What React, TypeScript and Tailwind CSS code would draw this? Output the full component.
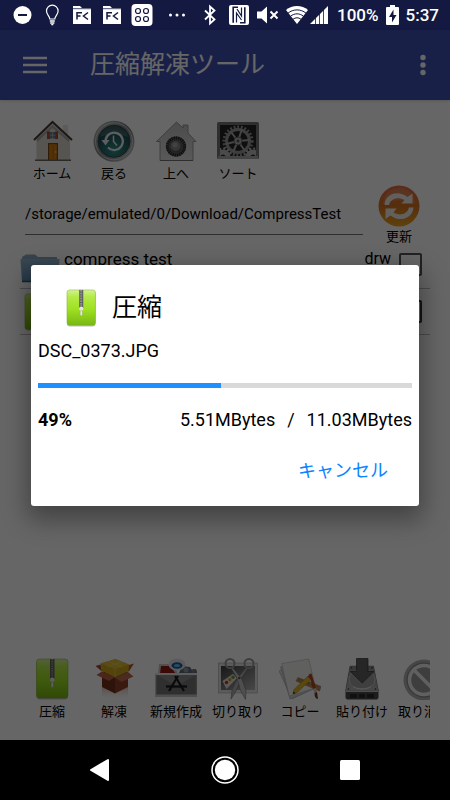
import { ReactNode, useState } from "react";

interface toolInterface {
  label: string;
  icon: ReactNode;
}

const HomeIcon = () => (
  <svg viewBox="0 0 42 42" className="size-[42px]">
    <rect x="32" y="3" width="5" height="14" fill="#e4e4e0" />
    <rect x="31" y="3" width="7" height="2" fill="#fff" />
    <path d="M5.500 19 21.500 3 39 19V40H5.500Z" fill="#d6d4cc" />
    <path d="M6 19 21.500 5 38 19V22L21.500 8 6 22Z" fill="#aaa79e" />
    <path d="M3 20 21.500 2 41 20" fill="none" stroke="#4b3a35" strokeWidth="2" />
    <rect x="16" y="11.500" width="3" height="7.500" fill="#a64a30" />
    <rect x="24" y="11.500" width="3" height="7.500" fill="#a64a30" />
    <rect x="18.500" y="12" width="6" height="6.500" fill="#667688" />
    <path d="M18.500 15.200h6M21.500 12v6.500" stroke="#d8d8d8" strokeWidth="0.500" />
    <rect x="17" y="23" width="10" height="17" fill="#7e4a14" />
    <rect x="18.200" y="24.200" width="7.600" height="15.800" fill="#d27d17" />
    <path d="M22 25v14" stroke="#a85f10" strokeWidth="0.800" />
    <circle cx="24.800" cy="32" r="0.700" fill="#ffe6a0" />
    <rect x="4" y="39.500" width="36" height="1.500" fill="#6b675e" />
  </svg>
);

const BackIcon = () => (
  <svg viewBox="0 0 42 42" className="size-[42px]">
    <defs>
      <linearGradient id="rim" x1="0" y1="0" x2="1" y2="1">
        <stop offset="0" stopColor="#bfc3c3" />
        <stop offset="0.500" stopColor="#777c7e" />
        <stop offset="1" stopColor="#c8cccc" />
      </linearGradient>
      <radialGradient id="glass" cx="0.500" cy="0.800" r="0.800">
        <stop offset="0" stopColor="#2f8f8c" />
        <stop offset="1" stopColor="#12343c" />
      </radialGradient>
    </defs>
    <circle cx="21" cy="21.300" r="20.500" fill="url(#rim)" />
    <circle cx="21" cy="21.300" r="18.500" fill="none" stroke="#e2e6e6" strokeWidth="0.700" />
    <circle cx="21" cy="21.300" r="16" fill="url(#glass)" stroke="#3c4648" />
    <path d="M6.500 17a15 15 0 0 1 29 0c-8-3.500-21-3.500-29 0Z" fill="#fff" opacity="0.160" />
    <path d="M12.500 20.500a8.700 8.700 0 1 1 2.500 7" fill="none" stroke="#e9eeee" strokeWidth="2.200" />
    <path d="M8.500 20h8l-4 5.500Z" fill="#e9eeee" />
    <path d="M20.500 15.500V21.500l3.500 4" fill="none" stroke="#e9eeee" strokeWidth="1.500" />
  </svg>
);

const UpIcon = () => (
  <svg viewBox="0 0 42 42" className="size-[42px]">
    <defs>
      <linearGradient id="steel" x1="0" y1="0" x2="0" y2="1">
        <stop offset="0" stopColor="#bdbdbd" />
        <stop offset="1" stopColor="#dedede" />
      </linearGradient>
    </defs>
    <path
      d="M5 40.500V21.500H1.500L21.500 2l6.500 6V5h5v8l8 8.500H38V40.500Z"
      fill="url(#steel)"
      stroke="#888"
      strokeWidth="0.800"
    />
    <path d="M5 40.500H38" stroke="#777" />
    <circle cx="21" cy="26.500" r="10.300" fill="#6a6a6a" />
    <circle cx="21" cy="26.500" r="8.500" fill="none" stroke="#292929" strokeWidth="3" strokeDasharray="1.500 0.700" />
    <circle cx="21" cy="26.500" r="6.500" fill="#555" />
    <circle cx="20.500" cy="26" r="5" fill="#858585" />
    <circle cx="20" cy="25" r="2.500" fill="#a5a5a5" />
  </svg>
);

const SortIcon = () => (
  <svg viewBox="0 0 42 42" className="size-[42px]">
    <defs>
      <clipPath id="screen">
        <rect x="3" y="5" width="36" height="31" />
      </clipPath>
    </defs>
    <rect x="0" y="2" width="42" height="37" rx="1.500" fill="#777" />
    <rect x="1" y="36" width="40" height="3" fill="#a8a8a8" />
    <rect x="3" y="5" width="36" height="31" fill="#242424" />
    <g clipPath="url(#screen)" fill="none">
      <circle cx="21" cy="21" r="14" stroke="#999" strokeWidth="3" strokeDasharray="1.800 1.800" />
      <circle cx="21" cy="21" r="11.500" stroke="#999" strokeWidth="3" />
      <path d="M21 21 14 12M21 21l12-1M21 21l7 10M21 21 9 24M21 21l4-12M21 21l-5 11" stroke="#aaa" strokeWidth="2" />
      <circle cx="21" cy="21" r="4" fill="#b2b2b2" stroke="#666" />
      <circle cx="21" cy="21" r="1.500" fill="#555" />
      <circle cx="6" cy="37" r="5" stroke="#bbb" strokeWidth="5" />
      <circle cx="6" cy="37" r="8.500" stroke="#bbb" strokeWidth="2" strokeDasharray="2 2" />
      <circle cx="36" cy="37" r="5" stroke="#bbb" strokeWidth="5" />
      <circle cx="36" cy="37" r="8.500" stroke="#bbb" strokeWidth="2" strokeDasharray="2 2" />
    </g>
  </svg>
);

const RefreshIcon = () => (
  <svg viewBox="0 0 42 42" className="size-[42px]">
    <defs>
      <linearGradient id="orange" x1="0" y1="0" x2="0" y2="1">
        <stop offset="0" stopColor="#e0704a" />
        <stop offset="0.500" stopColor="#d9741f" />
        <stop offset="1" stopColor="#eda323" />
      </linearGradient>
    </defs>
    <circle cx="21" cy="21" r="20.500" fill="url(#orange)" />
    <path d="M5 19a16 16 0 0 1 32 0c-9-5-23-5-32 0Z" fill="#fff" opacity="0.120" />
    <g fill="#f4f0ea">
      <path d="M6.500 20C7 9 20 4.500 29.500 12L34.500 8.500V18.500H23.500L26.500 15C20 11.500 12.500 13.500 11 20Z" />
      <path d="M35.500 22.500C35 33 22 38 12.500 30.500L7.500 34V23.500H18.500L15.500 27.500C22 31.500 29.500 29 31 22.500Z" />
    </g>
  </svg>
);

const ZipIcon = ({ className }: { className: string }) => (
  <svg viewBox="0 0 42 42" className={className}>
    <defs>
      <linearGradient id="lime" x1="0" y1="0" x2="0" y2="1">
        <stop offset="0" stopColor="#d3f296" />
        <stop offset="0.200" stopColor="#b4ea46" />
        <stop offset="0.550" stopColor="#9ee022" />
        <stop offset="1" stopColor="#78b814" />
      </linearGradient>
    </defs>
    <rect x="5.500" y="2" width="31.500" height="39.500" rx="3" fill="#000" opacity="0.250" />
    <rect x="5.500" y="1" width="31.500" height="39" rx="3" fill="url(#lime)" stroke="#76ab22" strokeWidth="0.500" />
    <path d="M19 1h4.500v20H19Z" fill="#5d5d5d" />
    <path d="M21.200 1v20" stroke="#a5a5a5" strokeWidth="2.200" strokeDasharray="0.900 0.900" />
    <path d="M19.500 20h3.500l.6 2.500-1.300 1.500h-2.100L19 22.500Z" fill="#e5e5e5" />
    <rect x="20.100" y="24" width="2.300" height="5.500" rx="1" fill="#f2f2f2" stroke="#8d9f73" strokeWidth="0.500" />
  </svg>
);

const UnpackIcon = () => (
  <svg viewBox="0 0 42 42" className="size-[42px]">
    <defs>
      <linearGradient id="mirror" x1="0" y1="0" x2="0" y2="1">
        <stop offset="0" stopColor="#c08070" stopOpacity="0.600" />
        <stop offset="1" stopColor="#fff" stopOpacity="0" />
      </linearGradient>
    </defs>
    <path d="M9 28.500 22 35l13-6.500V38l-13 4-13-4Z" fill="url(#mirror)" />
    <path d="M9 14v15l13 6.500V19Z" fill="#74301d" />
    <path d="M22 19v16.500L35 29V14Z" fill="#8e4028" />
    <path d="M9 14 22.500 9 35 14 22 20Z" fill="#542215" />
    <path d="m7.500 5.500 15-4.500L36 6.500V13l-14 6.500L9 13Z" fill="#cfa81c" />
    <path d="m7.500 5.500 15-4.500L36 6.500 22 11Z" fill="#dcbb38" />
    <path d="M22 11v8.500M15 3.200l14 5.800M29 3.800 14.500 8.500" fill="none" stroke="#ead45c" strokeWidth="0.600" />
    <path d="M9 13.500 3.500 17 16 23l6-4Z" fill="#ba6045" />
    <path d="M22 19.500 35 14l5.500 4.500L28.500 24Z" fill="#be6a4d" />
    <path d="m2.500 8 5-1.500 1.500 7Z" fill="#9e4a33" />
    <path d="m36 7 5-1.500-5.500 8.500Z" fill="#ac553d" />
  </svg>
);

const NewIcon = () => (
  <svg viewBox="0 0 42 42" className="size-[42px]">
    <path d="M3 16 4 6h15l4 10Z" fill="#c8c8c8" />
    <path d="M5 16 6 8h9l6 8Z" fill="#971818" />
    <path d="M24 15 27 8l8 1 2 3 4-1 1.500 4Z" fill="#5d6c80" />
    <circle cx="31" cy="12" r="2.500" fill="#8f9aa8" />
    <circle cx="38.500" cy="13" r="2" fill="#6d7a88" />
    <ellipse cx="22" cy="6.500" rx="8.500" ry="6" fill="#dfe3e6" />
    <ellipse cx="22" cy="7.500" rx="5.500" ry="3.200" fill="#1d5a9c" />
    <ellipse cx="22" cy="7.500" rx="3" ry="1.600" fill="#60c4ef" />
    <rect x="0.500" y="15.500" width="41.500" height="23.500" fill="#8d8d8d" />
    <path d="M2 17h38.500v20H2Z" fill="#777" />
    <path d="M2 17h38.500L22 28Z" fill="#999595" opacity="0.700" />
    <rect x="0.500" y="15" width="41.500" height="2" fill="#e6e6e6" />
    <rect x="0.500" y="36.500" width="41.500" height="2.500" fill="#c4c4c4" />
    <g stroke="#191919" strokeWidth="2.200">
      <path d="M23 18 14 33" />
      <path d="m20 18 9 15" />
      <path d="M11 28.500h21" />
    </g>
  </svg>
);

const CutIcon = () => (
  <svg viewBox="0 0 42 42" className="size-[42px]">
    <defs>
      <linearGradient id="photo" x1="0" y1="0" x2="1" y2="1">
        <stop offset="0" stopColor="#3e3e3e" />
        <stop offset="1" stopColor="#b5b5b5" />
      </linearGradient>
    </defs>
    <rect x="1.500" y="5" width="39" height="30" fill="#e4e4e4" stroke="#aaa" strokeWidth="0.600" />
    <rect x="4" y="8" width="34" height="24" fill="url(#photo)" />
    <path d="m5.500 23 10.500-7 4 4L9.500 31Z" fill="#e5e2dc" />
    <circle cx="9.500" cy="24.500" r="1.700" fill="#b93526" />
    <circle cx="12.800" cy="21.800" r="1.700" fill="#d79a21" />
    <circle cx="16" cy="19.200" r="1.700" fill="#5c9c31" />
    <path d="M29.500 9.500 20.500 20 15 32l-1 9 4.500-7L24 21l7-11Z" fill="#b0b0b0" stroke="#666" strokeWidth="0.500" />
    <path d="m15.500 9.500 9 11 4.500 12-.5 9-5-9-3.500-12.500L14 10Z" fill="#c4c4c4" stroke="#666" strokeWidth="0.500" />
    <ellipse cx="13" cy="5.500" rx="4.500" ry="4.500" fill="none" stroke="#9a9a9a" strokeWidth="2" />
    <ellipse cx="32" cy="5.500" rx="4.500" ry="4.500" fill="none" stroke="#9a9a9a" strokeWidth="2" />
    <circle cx="22.300" cy="20" r="1.200" fill="#555" />
  </svg>
);

const CopyIcon = () => (
  <svg viewBox="0 0 42 42" className="size-[42px]">
    <path d="m0 13 24-9 12 26-23 11Z" fill="#dedede" stroke="#999" strokeWidth="0.500" />
    <path d="m1.500 9 26-6 9 27L11 41Z" fill="#d2d2d2" stroke="#999" strokeWidth="0.500" />
    <path d="m2.700 5.500 27-4.500 7 29-26.500 8Z" fill="#f0f0ec" stroke="#aaa" strokeWidth="0.500" />
    <path d="m17 23 2-3.500 23 9-1.500 4.500Z" fill="#bc8a54" stroke="#8a6238" strokeWidth="0.500" />
    <path d="m20 23 1-2m2 3 1-2m2 3.200 1-2m2 3.200 1-2m2 3.200 1-2m2 3.200 1-2" stroke="#6d4820" strokeWidth="0.500" />
    <path d="m28.500 18.500 3.500 3L18 34.500l-4 1.500 1-4.500Z" fill="#dfb724" stroke="#9a7a16" strokeWidth="0.500" />
    <path d="m28.500 18.500 1.500-1.500 3.500 3-1.500 1.500Z" fill="#c23b4c" />
    <path d="m14 36 .5-2.500 2 1.700Z" fill="#333" />
    <path d="m30 16 2.500-.5L37 30l-3 1Z" fill="#b0491f" />
    <path d="m34 31 3-1 1 4-2.500 1Z" fill="#c8c8c8" />
    <path d="m35.500 35 2.500-1 1 7c-2.500 0-3.500-3-3.500-6Z" fill="#6b3622" />
  </svg>
);

const PasteIcon = () => (
  <svg viewBox="0 0 42 42" className="size-[42px]">
    <defs>
      <linearGradient id="drive" x1="0" y1="0" x2="0" y2="1">
        <stop offset="0" stopColor="#8a8a8a" />
        <stop offset="1" stopColor="#b3b3b5" />
      </linearGradient>
    </defs>
    <path d="M9 8h23.500L37.500 33v7l-1.500 1.500H6L4.500 40V33Z" fill="#4a4a4d" />
    <path d="M9 8h23.500L37.500 33H4.500Z" fill="url(#drive)" stroke="#777" strokeWidth="0.500" />
    <ellipse cx="21" cy="21.500" rx="13" ry="10" fill="#9e9ea0" stroke="#d0d0d2" strokeWidth="0.800" />
    <path d="M12 28.500c4 3 14 3 18 0" fill="none" stroke="#ddd" />
    <circle cx="10.500" cy="10" r="0.800" fill="#333" />
    <circle cx="31" cy="10" r="0.800" fill="#333" />
    <circle cx="7.500" cy="31" r="0.800" fill="#333" />
    <circle cx="34.500" cy="31" r="0.800" fill="#333" />
    <path d="M4.500 33.500h33" stroke="#c6c6c8" />
    <path d="M9 36h7v4H9ZM18 36h6v4h-6ZM26 36h7v4h-7Z" fill="#28292e" />
    <path d="M15.500.5h11.500V13.500h6L21.200 25 9.500 13.500h6Z" fill="#606060" stroke="#303030" strokeWidth="0.700" />
  </svg>
);

const CancelIcon = () => (
  <svg viewBox="0 0 42 42" className="size-[42px]">
    <circle cx="21" cy="22" r="20.500" fill="#b0b0b0" />
    <circle cx="21" cy="22" r="17.500" fill="#8b8b8b" />
    <circle cx="21" cy="22" r="14.500" fill="#9b9b9b" stroke="#f0f0f0" strokeWidth="3.500" />
    <path d="m11 12 20 20" stroke="#f0f0f0" strokeWidth="3.500" />
  </svg>
);

const FolderIcon = () => (
  <svg viewBox="0 0 40 32" className="h-8 w-10">
    <defs>
      <linearGradient id="folder" x1="0" y1="0" x2="0" y2="1">
        <stop offset="0" stopColor="#8fb4cf" />
        <stop offset="1" stopColor="#5f8fb2" />
      </linearGradient>
    </defs>
    <path d="M2 4 6 1.500h9L18 4h19v6H2Z" fill="#88a9c0" />
    <path d="M.5 6H39.500L38 28.500H2Z" fill="url(#folder)" />
    <path d="M2 28.500h36" stroke="#395a74" strokeWidth="1.500" />
  </svg>
);

const FileTabIcon = () => (
  <svg viewBox="0 0 22 22" className="size-[22px]">
    <path d="M2 4.500V2h7l2 2h9v16H2Z" fill="#fff" />
    <path d="M2 4.700h18" stroke="#131940" strokeWidth="0.800" />
    <g fill="none" stroke="#131940" strokeWidth="1.500">
      <path d="M6 15.500V8.800h5M6 12h3.500" />
      <path d="M17 8.500 12.500 12l4.500 3.500" />
    </g>
  </svg>
);

const StatusBar = () => (
  <div className="flex h-[30px] shrink-0 items-center justify-between bg-[#131940] px-[11px] text-white">
    <div className="flex items-center gap-2">
      <svg viewBox="0 0 22 22" className="size-[22px]">
        <circle cx="11.500" cy="11" r="9" fill="#fff" />
        <path d="M7 11h9" stroke="#131940" strokeWidth="2" />
      </svg>
      <svg viewBox="0 0 22 22" className="size-[22px]" fill="none" stroke="#fff" strokeWidth="1.200">
        <path d="M8.800 15c0-3-3.300-4-3.300-8a5.800 5.800 0 0 1 11.600 0c0 4-3.300 5-3.300 8Z" />
        <path d="M8.800 17h5M9.200 19h4.200M10.300 20.600h2" strokeWidth="1.300" />
      </svg>
      <FileTabIcon />
      <FileTabIcon />
      <svg viewBox="0 0 22 22" className="size-[22px]">
        <rect x="0.500" y="0" width="21" height="22" rx="4" fill="#fff" />
        <g fill="none" stroke="#131940" strokeWidth="1.200">
          <circle cx="7" cy="7" r="2.500" />
          <circle cx="15" cy="7" r="2.500" />
          <circle cx="7" cy="15" r="2.500" />
          <circle cx="15" cy="15" r="2.500" />
        </g>
      </svg>
      <svg viewBox="0 0 28 22" className="h-[22px] w-7" fill="#fff">
        <circle cx="9.500" cy="11" r="1.500" />
        <circle cx="16" cy="11" r="1.500" />
        <circle cx="22.500" cy="11" r="1.500" />
      </svg>
    </div>
    <div className="flex items-center gap-[7px]">
      <svg viewBox="0 0 22 22" className="size-[22px]" fill="none" stroke="#fff" strokeWidth="1.800">
        <path d="m6 6.500 9.500 9L11 19.500V2.500l4.500 4L6 15.500" />
      </svg>
      <svg viewBox="0 0 22 22" className="size-[22px]">
        <rect x="1" y="1" width="20" height="20" rx="2" fill="#fff" />
        <g fill="none" stroke="#131940" strokeWidth="1.600">
          <path d="M10 3.200H5.200V18.800" />
          <path d="M12 18.800h4.800V3.200" />
          <path d="M8.500 18.500V9l5 7" strokeWidth="1.200" />
          <path d="M13.500 3.500V12L9 5" strokeWidth="1.200" />
        </g>
      </svg>
      <svg viewBox="0 0 22 22" className="size-[22px]">
        <path d="M0 7.500h4.500L10 2.500v17l-5.500-5H0Z" fill="#fff" />
        <path d="m13.500 7.500 7 7m0-7-7 7" stroke="#fff" strokeWidth="2" />
      </svg>
      <div className="flex">
        <svg viewBox="0 0 22 22" className="size-[22px]">
          <path d="M0 6C6 .5 16 .5 22 6L11 20Z" fill="#fff" />
          <path d="M2 9.200c5-4.400 13-4.400 18 0M4.500 12.300c4-3.300 9-3.300 13 0M7 15.300c2.500-2 5.500-2 8 0" fill="none" stroke="#131940" strokeWidth="1" />
        </svg>
        <svg viewBox="0 0 22 22" className="size-[22px]">
          <path d="M2 20 20 2v18Z" fill="#fff" />
          <path d="M7.500 12v9M11.500 8v13M15.500 4v17" stroke="#131940" strokeWidth="0.800" />
        </svg>
      </div>
      <span className="text-[17px] leading-[22px] font-medium">100%</span>
      <svg viewBox="0 0 13 20" className="h-5 w-[13px]">
        <path d="M4 0h5v2h3q1 0 1 1v16q0 1-1 1H1q-1 0-1-1V3q0-1 1-1h3Z" fill="#fff" />
        <path d="M7.500 4.500 3 12h3v5.500L10.500 10h-3Z" fill="#131940" />
      </svg>
      <span className="text-[17px] leading-[22px] font-medium">5:37</span>
    </div>
  </div>
);

const ToolButton = ({ label, icon }: toolInterface) => (
  <button className="flex w-[62px] shrink-0 flex-col items-center">
    {icon}
    <span className="mt-1 text-[13px] leading-4 whitespace-nowrap">{label}</span>
  </button>
);

const topTools: toolInterface[] = [
  { label: "ホーム", icon: <HomeIcon /> },
  { label: "戻る", icon: <BackIcon /> },
  { label: "上へ", icon: <UpIcon /> },
  { label: "ソート", icon: <SortIcon /> },
];

const bottomTools: toolInterface[] = [
  { label: "圧縮", icon: <ZipIcon className="size-[42px]" /> },
  { label: "解凍", icon: <UnpackIcon /> },
  { label: "新規作成", icon: <NewIcon /> },
  { label: "切り取り", icon: <CutIcon /> },
  { label: "コピー", icon: <CopyIcon /> },
  { label: "貼り付け", icon: <PasteIcon /> },
  { label: "取り消し", icon: <CancelIcon /> },
];

const ProgressDialog = ({ onCancel }: { onCancel: () => void }) => {
  const progress = 49;

  return (
    <div
      role="dialog"
      aria-label="圧縮"
      className="w-full rounded-[3px] bg-white px-[7px] pt-6 pb-5 text-black shadow-[0_10px_24px_4px_rgba(0,0,0,0.35)]"
    >
      <div className="flex items-center gap-3 pl-6">
        <ZipIcon className="size-[38px]" />
        <h2 className="text-[25px] leading-[38px]">圧縮</h2>
      </div>
      <p className="mt-3 text-[18px] leading-6">DSC_0373.JPG</p>
      <div
        role="progressbar"
        aria-label="圧縮"
        aria-valuenow={progress}
        className="mt-5 h-[5px] bg-[#d9d9d9]"
      >
        <div className="h-full bg-[#1e90ff]" style={{ width: `${progress}%` }} />
      </div>
      <div className="mt-5 flex justify-between text-[18px] leading-6">
        <span className="font-bold">49%</span>
        <div className="flex gap-3">
          <span>5.51MBytes</span>
          <span>/</span>
          <span>11.03MBytes</span>
        </div>
      </div>
      <div className="mt-6 flex justify-end pr-6">
        <button className="text-[18px] leading-[30px] text-[#0a84ff]" onClick={onCancel}>
          キャンセル
        </button>
      </div>
    </div>
  );
};

const App = () => {
  const [isCompressing, setIsCompressing] = useState<boolean>(true);
  const [path, setPath] = useState<string>(
    "/storage/emulated/0/Download/CompressTest"
  );

  return (
    <div className="flex h-screen flex-col overflow-hidden bg-white font-['Roboto','Noto_Sans_CJK_JP',sans-serif] text-black">
      <StatusBar />
      <div className="relative flex min-h-0 flex-1 flex-col">
        <header className="flex h-[70px] shrink-0 items-center bg-[#3f51b5] px-[23px] text-white shadow-sm">
          <button aria-label="メニュー">
            <svg viewBox="0 0 24 18" className="h-[18px] w-6" stroke="#fff" strokeWidth="2.500">
              <path d="M0 2h24M0 9h24M0 16h24" />
            </svg>
          </button>
          <h1 className="ml-[43px] flex-1 text-[25px] leading-8">圧縮解凍ツール</h1>
          <button aria-label="その他">
            <svg viewBox="0 0 8 22" className="h-[22px] w-2" fill="#fff">
              <circle cx="4" cy="3.500" r="2.700" />
              <circle cx="4" cy="11" r="2.700" />
              <circle cx="4" cy="18.500" r="2.700" />
            </svg>
          </button>
        </header>

        <nav className="mt-5 flex pl-[21px]">
          {topTools.map((tool) => (
            <ToolButton key={tool.label} {...tool} />
          ))}
        </nav>

        <div className="mt-[3px] flex items-start pr-5 pl-[25px]">
          <input
            aria-label="パス"
            value={path}
            onChange={(e) => setPath(e.target.value)}
            className="mt-2 h-[42px] min-w-0 flex-1 border-b border-[#777] text-[15px] outline-none"
          />
          <button className="ml-[15px] flex shrink-0 flex-col items-center pr-[10px]">
            <RefreshIcon />
            <span className="mt-[2px] text-[13px] leading-4">更新</span>
          </button>
        </div>

        <ul className="mx-5">
          <li className="flex h-[44px] items-start border-b border-[#bbb] pr-2">
            <div className="mt-2">
              <FolderIcon />
            </div>
            <span className="ml-1 flex-1 text-[17px] leading-7">compress test</span>
            <span className="mr-2 text-[16px] leading-7">drw</span>
            <input
              type="checkbox"
              aria-label="compress test"
              className="mt-2 size-[23px] appearance-none rounded-[2px] border-2 border-[#555]"
            />
          </li>
          <li className="flex h-[46px] items-center border-b border-[#bbb] pr-2">
            <ZipIcon className="size-[38px]" />
            <span className="flex-1" />
            <input
              type="checkbox"
              aria-label="圧縮ファイル"
              className="size-[23px] appearance-none rounded-[2px] border-2 border-[#333]"
            />
          </li>
        </ul>

        <nav className="mt-auto mr-5 mb-5 flex overflow-hidden pl-[21px]">
          {bottomTools.map((tool) => (
            <ToolButton key={tool.label} {...tool} />
          ))}
        </nav>

        {isCompressing && (
          <div className="absolute inset-0 flex items-center bg-black/60 px-[31px]">
            <ProgressDialog onCancel={() => setIsCompressing(false)} />
          </div>
        )}
      </div>

      <footer className="flex h-[60px] shrink-0 items-center justify-center gap-[97px] bg-black">
        <button aria-label="戻る">
          <svg viewBox="0 0 28 28" className="size-7">
            <path d="M5 14 22 4v20Z" fill="#fff" stroke="#fff" strokeWidth="2" strokeLinejoin="round" />
          </svg>
        </button>
        <button aria-label="ホーム">
          <svg viewBox="0 0 28 28" className="size-7">
            <circle cx="14" cy="14" r="13" fill="none" stroke="#fff" strokeWidth="1.500" />
            <circle cx="14" cy="14" r="10.200" fill="#fff" />
          </svg>
        </button>
        <button aria-label="最近">
          <svg viewBox="0 0 28 28" className="size-7">
            <rect x="4" y="4" width="20" height="20" rx="1.500" fill="#fff" />
          </svg>
        </button>
      </footer>
    </div>
  );
};

export default App;
